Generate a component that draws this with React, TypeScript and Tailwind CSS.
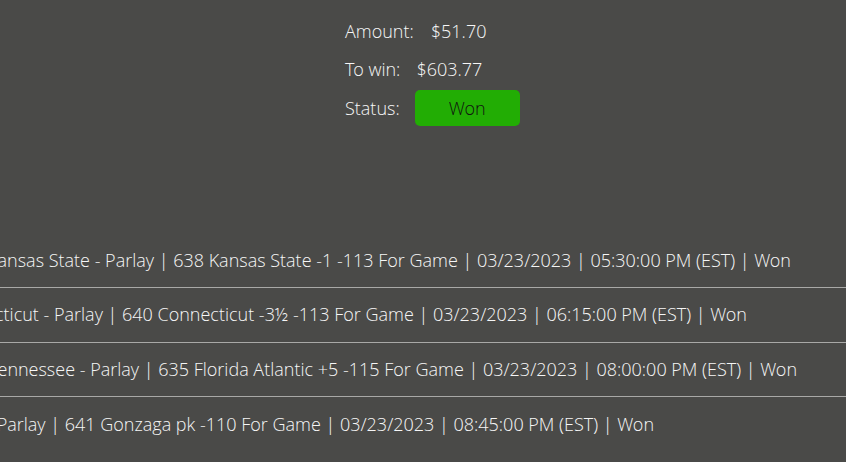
import React from "react";

const rows = [
  { text: "Michigan State vs Kansas State - Parlay | 638 Kansas State -1 -113 For Game | 03/23/2023 | 05:30:00 PM (EST) | Won", pr: "pr-[55px]" },
  { text: "Arkansas vs Connecticut - Parlay | 640 Connecticut -3½ -113 For Game | 03/23/2023 | 06:15:00 PM (EST) | Won", pr: "pr-[99px]" },
  { text: "Florida Atlantic vs Tennessee - Parlay | 635 Florida Atlantic +5 -115 For Game | 03/23/2023 | 08:00:00 PM (EST) | Won", pr: "pr-[49px]" },
  { text: "Gonzaga vs UCLA - Parlay | 641 Gonzaga pk -110 For Game | 03/23/2023 | 08:45:00 PM (EST) | Won", pr: "pr-[192px]" },
];

export default function App() {
  return (
    <div className="min-h-screen w-full overflow-hidden bg-[#4a4a48] font-['Open_Sans_Light','Open_Sans',sans-serif] font-light text-[18px] text-[#f6f6f6] antialiased">
      <div className="flex flex-col pl-[345px] pt-[12px]">
        <div className="flex h-[38.5px] items-center gap-[17px]">
          <span>Amount:</span>
          <span>$51.70</span>
        </div>
        <div className="flex h-[38.5px] items-center gap-[16px]">
          <span>To win:</span>
          <span>$603.77</span>
        </div>
        <div className="flex h-[38.5px] items-center gap-[15px]">
          <span>Status:</span>
          <span className="flex h-[36px] w-[105px] items-center justify-center rounded-[5px] bg-[#22ad04] text-[#111]">
            Won
          </span>
        </div>
      </div>
      <div className="mt-[106px] divide-y divide-[#a9a9a7]">
        {rows.map((r, i) => (
          <div key={i} className={`flex h-[54.5px] items-center justify-end whitespace-nowrap ${r.pr}`}>
            <span className="shrink-0">{r.text}</span>
          </div>
        ))}
      </div>
    </div>
  );
}
